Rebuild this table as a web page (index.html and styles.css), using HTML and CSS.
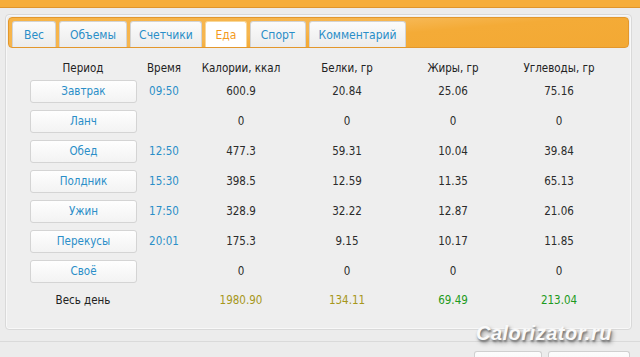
FILE: index.html
```html
<!DOCTYPE html>
<html lang="ru">
<head>
<meta charset="utf-8">
<link rel="stylesheet" href="styles.css">
</head>
<body>
<div class="topbar"></div>
<div class="dialog">
  <div class="tabbar">
    <div class="tab">Вес</div>
    <div class="tab t2">Объемы</div>
    <div class="tab t3">Счетчики</div>
    <div class="tab active">Еда</div>
    <div class="tab t5">Спорт</div>
    <div class="tab t6">Комментарий</div>
  </div>
  <div class="grid">
    <div class="h">Период</div><div class="h">Время</div><div class="h">Калории, ккал</div><div class="h">Белки, гр</div><div class="h">Жиры, гр</div><div class="h">Углеводы, гр</div>

    <div class="c"><span class="btn">Завтрак</span></div><div class="c time">09:50</div><div class="c">600.9</div><div class="c">20.84</div><div class="c">25.06</div><div class="c">75.16</div>
    <div class="c"><span class="btn">Ланч</span></div><div class="c time"></div><div class="c">0</div><div class="c">0</div><div class="c">0</div><div class="c">0</div>
    <div class="c"><span class="btn">Обед</span></div><div class="c time">12:50</div><div class="c">477.3</div><div class="c">59.31</div><div class="c">10.04</div><div class="c">39.84</div>
    <div class="c"><span class="btn">Полдник</span></div><div class="c time">15:30</div><div class="c">398.5</div><div class="c">12.59</div><div class="c">11.35</div><div class="c">65.13</div>
    <div class="c"><span class="btn">Ужин</span></div><div class="c time">17:50</div><div class="c">328.9</div><div class="c">32.22</div><div class="c">12.87</div><div class="c">21.06</div>
    <div class="c"><span class="btn">Перекусы</span></div><div class="c time">20:01</div><div class="c">175.3</div><div class="c">9.15</div><div class="c">10.17</div><div class="c">11.85</div>
    <div class="c"><span class="btn">Своё</span></div><div class="c time"></div><div class="c">0</div><div class="c">0</div><div class="c">0</div><div class="c">0</div>

    <div class="t">Весь день</div><div class="t"></div><div class="t olive">1980.90</div><div class="t olive">134.11</div><div class="t green">69.49</div><div class="t green">213.04</div>
  </div>
</div>
<div class="footer">
  <span class="fbtn b1"></span>
  <span class="fbtn b2"></span>
</div>
<div class="watermark">Calorizator.ru</div>
</body>
</html>
```

FILE: styles.css
```css
html, body {
  margin: 0;
  padding: 0;
}
body {
  width: 640px;
  height: 357px;
  overflow: hidden;
  background: #ececec;
  font-family: "DejaVu Sans Condensed", "DejaVu Sans", Tahoma, sans-serif;
  font-size: 11.5px;
  color: #2b2b2b;
  position: relative;
}
.topbar {
  height: 7px;
  background: #f6ad3a;
  border-bottom: 1px solid #e0952b;
}
.dialog {
  margin: 6px 8px 0 5px;
  height: 316px;
  border: 1px solid #d9d9d9;
  border-radius: 4px;
  background: #eeeeee;
  box-shadow: inset 0 0 0 1px #f8f8f8;
  padding: 2px;
  box-sizing: border-box;
}
.tabbar {
  height: 31px;
  box-sizing: border-box;
  border: 1px solid #e3972c;
  border-radius: 4px;
  background: linear-gradient(175deg, #f7b447 0%, #f6b650 45%, #f4ab37 60%, #f3a934 100%);
  display: flex;
  align-items: flex-end;
  padding-left: 3px;
  gap: 3px;
}
.tab {
  height: 26px;
  box-sizing: border-box;
  border: 1px solid #d3d3d3;
  border-bottom: none;
  border-radius: 3px 3px 0 0;
  background: linear-gradient(#fbfbfb, #ececec);
  color: #2a8ec8;
  font-size: 12px;
  display: flex;
  align-items: center;
  justify-content: center;
  width: 44px;
}
.tab.t2 { width: 68px; }
.tab.t3 { width: 72px; }
.tab.active {
  width: 42px;
  background: #ffffff;
  color: #f39a1e;
  border-color: #f7d79a;
}
.tab.t5 { width: 56px; }
.tab.t6 { width: 97px; }

.grid {
  display: grid;
  grid-template-columns: 108px 54px 100px 112px 100px 112px;
  grid-template-rows: 16px repeat(7, 30px) 28px;
  padding: 12px 0 0 21px;
}
.h, .c, .t {
  display: flex;
  align-items: center;
  justify-content: center;
}
.h { color: #222; }
.time { color: #2a8ec8; }
.btn {
  width: 107px;
  height: 23px;
  box-sizing: border-box;
  border: 1px solid #d4d4d4;
  border-radius: 3px;
  background: linear-gradient(#fefefe, #f3f3f3);
  color: #2a8ec8;
  display: flex;
  align-items: center;
  justify-content: center;
  margin-left: 1px;
}
.t { color: #222; }
.olive { color: #a6971a; }
.green { color: #1d9a20; }

.footer {
  margin-top: 11px;
  border-top: 1px solid #dadada;
  height: 20px;
  display: flex;
  gap: 6px;
  padding: 9px 0 0 474px;
}
.fbtn {
  height: 14px;
  border: 1px solid #d0d0d0;
  border-bottom: none;
  border-radius: 3px 3px 0 0;
  background: linear-gradient(#fdfdfd, #f4f4f4);
}
.b1 { width: 66px; }
.b2 { width: 80px; }
.watermark {
  position: absolute;
  left: 476px;
  top: 322px;
  font-family: "Liberation Sans", Arial, sans-serif;
  font-weight: bold;
  font-style: italic;
  font-size: 20px;
  letter-spacing: 0.5px;
  color: #fafafa;
  text-shadow: 1px 2px 2px #777, 2px 3px 4px #999;
}
```
